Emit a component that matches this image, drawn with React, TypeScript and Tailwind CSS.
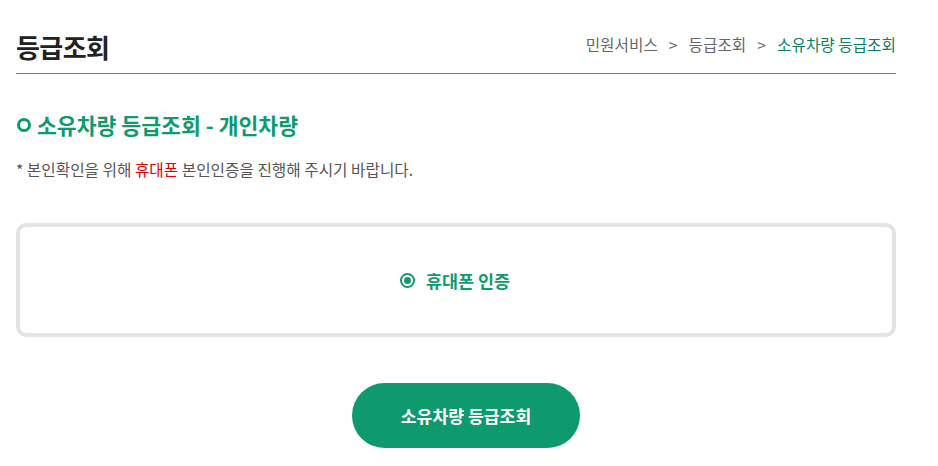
import { useState } from 'react';

const FONT = { fontFamily: '"Noto Sans CJK KR", "Noto Sans", sans-serif' };

export default function App() {
  const [method, setMethod] = useState('phone');

  return (
    <div className="w-[938px] h-[466px] bg-white overflow-hidden" style={FONT}>
      <div className="ml-4 w-[880px]">
        {/* 상단 타이틀 + 브레드크럼 */}
        <div className="flex items-center justify-between pt-[30px] pb-[9px] border-b border-[#777]">
          <h1 className="text-[26px] leading-[34px] font-bold text-[#222] tracking-[-0.6px]">등급조회</h1>
          <div className="flex items-center pb-1 text-[15.7px] text-[#666]">
            <span>민원서비스</span>
            <span className="mx-[11px]">&gt;</span>
            <span>등급조회</span>
            <span className="mx-[11px]">&gt;</span>
            <span className="text-[#0d7f5d]">소유차량 등급조회</span>
          </div>
        </div>

        {/* 섹션 제목 */}
        <h2 className="mt-[37px] flex items-center gap-[6px] text-[21.6px] leading-[28px] font-bold text-[#0f9a6e]">
          <span className="w-[14px] h-[14px] rounded-full border-[3.5px] border-[#0f9a6e] ml-[1px]" />
          소유차량 등급조회 - 개인차량
        </h2>

        <p className="mt-[21px] text-[15.7px] leading-[20px] text-[#555]">
          * 본인확인을 위해 <span className="text-[#e00000]">휴대폰</span> 본인인증을 진행해 주시기 바랍니다.
        </p>

        {/* 인증 방법 선택 */}
        <div className="mt-[43px] h-[114px] border-4 border-[#e4e4e4] rounded-[10px] flex items-center justify-center">
          <label className="flex items-center gap-[11px] cursor-pointer mt-[2px] mr-[2px]" onClick={() => setMethod('phone')}>
            <span className="w-[15px] h-[15px] rounded-full border-2 border-[#119a6e] flex items-center justify-center">
              {method === 'phone' && <span className="w-[7px] h-[7px] rounded-full bg-[#119a6e]" />}
            </span>
            <span className="text-[17.4px] font-bold text-[#119a6e]">휴대폰 인증</span>
          </label>
        </div>

        <div className="mt-[46px] flex justify-center pl-[20px]">
          <button className="w-[228px] h-[65px] rounded-full bg-[#0f9a6e] text-white text-[17.2px] font-bold">
            소유차량 등급조회
          </button>
        </div>
      </div>
    </div>
  );
}
